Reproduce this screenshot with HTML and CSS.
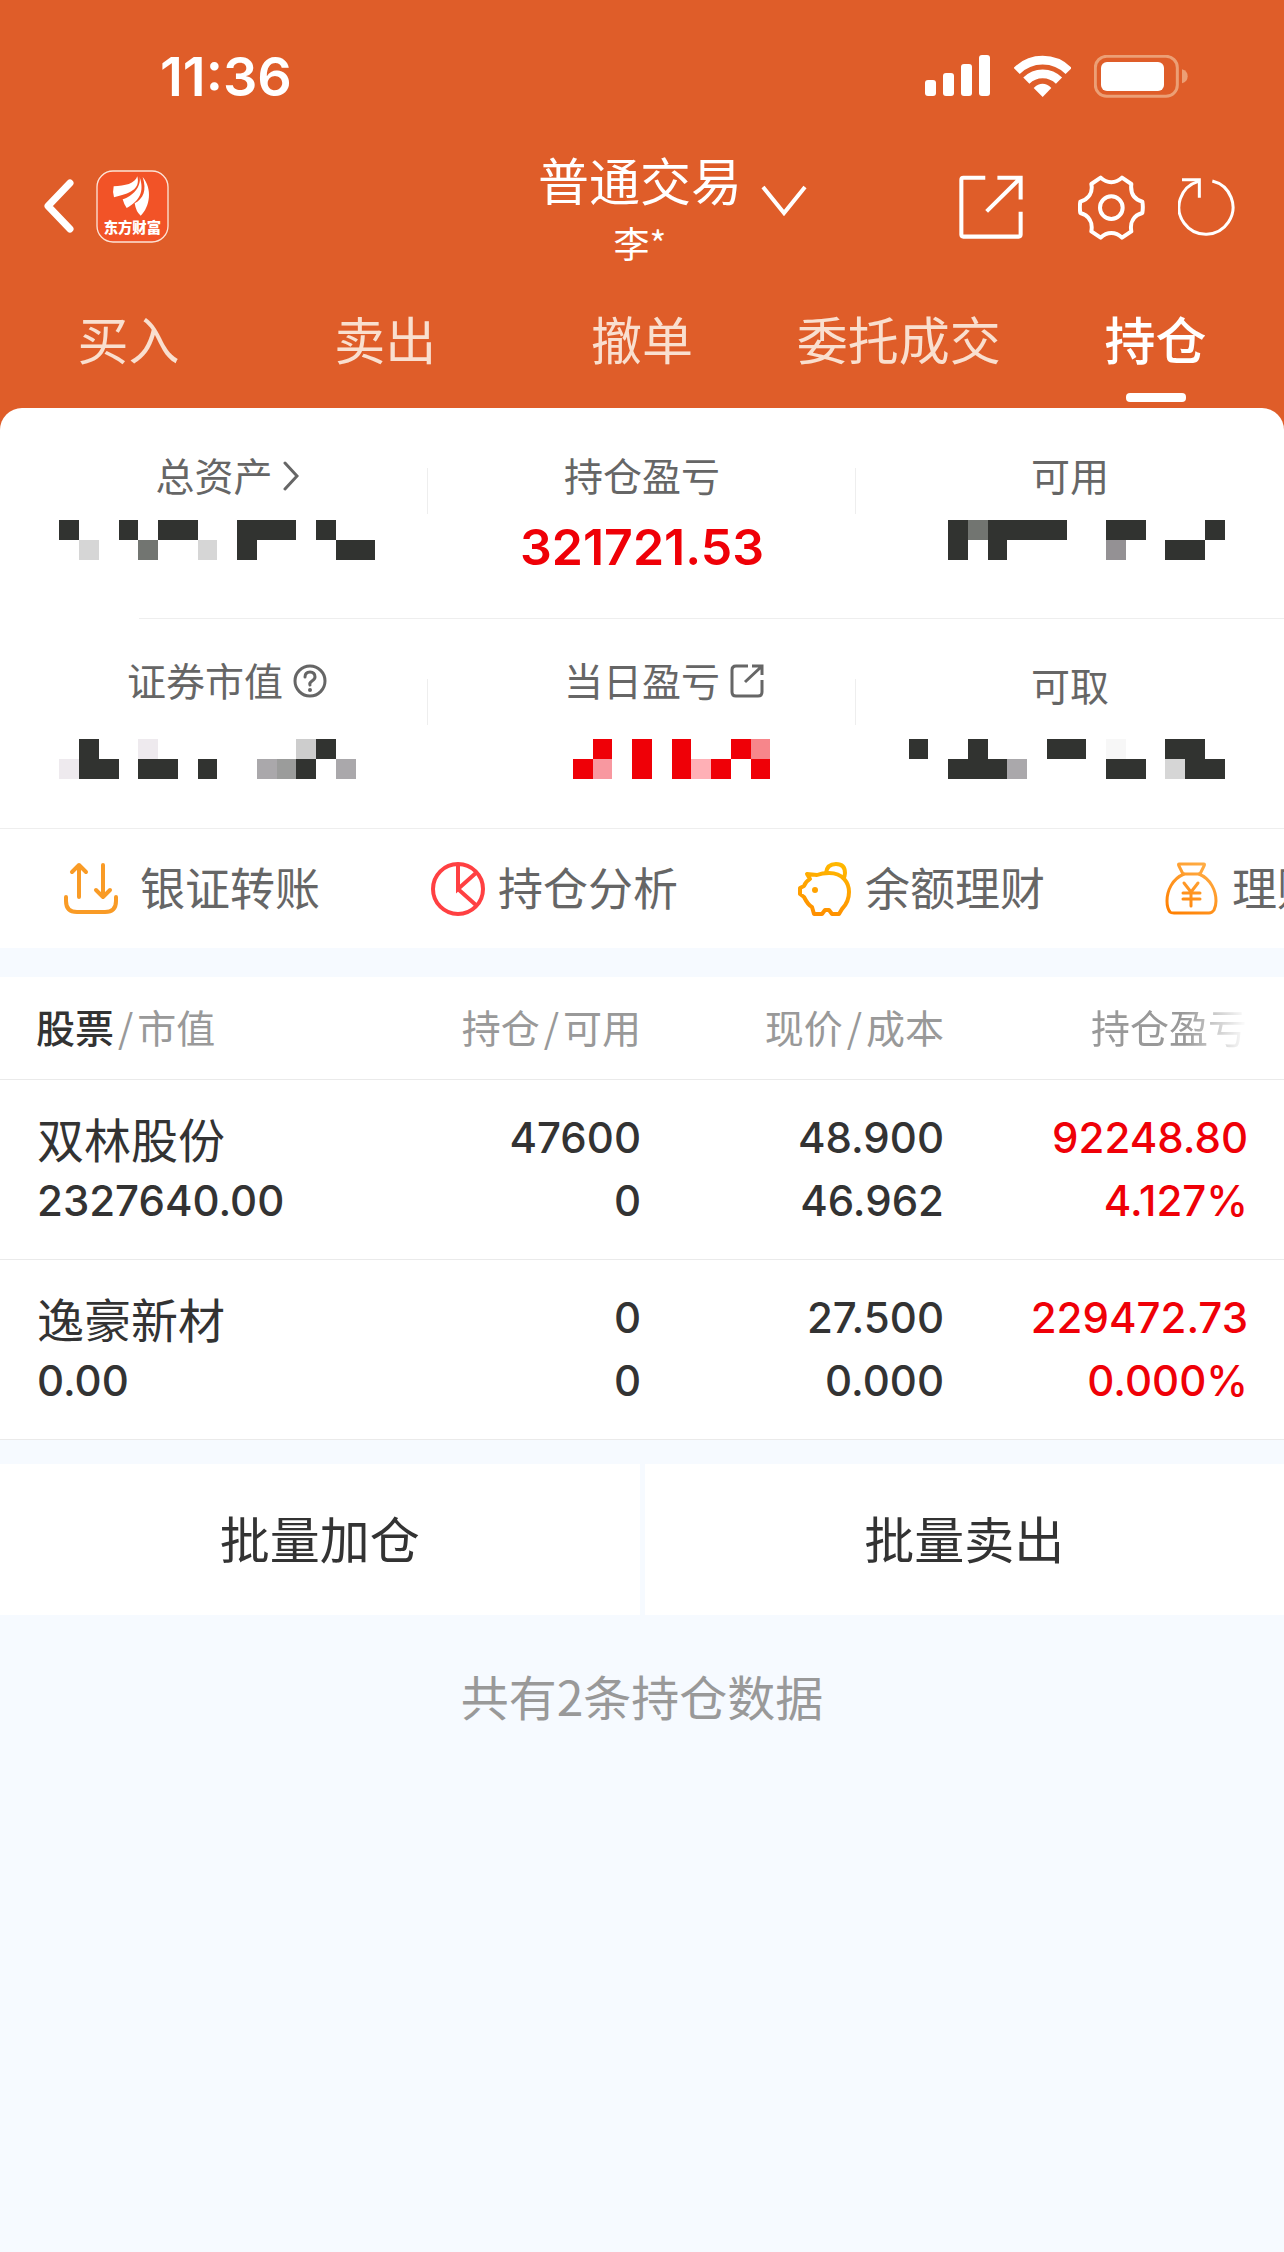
FILE: index.html
```
<!DOCTYPE html>
<html lang="zh-CN">
<head>
    <meta charset="UTF-8">
    <meta name="viewport" content="width=device-width, initial-scale=1.0">
    <title>普通交易 - 持仓</title>
    <link rel="stylesheet" href="styles.css">
</head>
<body>
    <header class="header">
        <div class="status-bar">
            <span class="time">11:36</span>
            <div class="status-icons">
                <svg width="66" height="42" viewBox="0 0 66 42" fill="#fff">
                    <rect x="0" y="25" width="11" height="16" rx="3"/>
                    <rect x="18" y="18" width="11" height="23" rx="3"/>
                    <rect x="36" y="9" width="11" height="32" rx="3"/>
                    <rect x="54" y="0" width="11" height="41" rx="3"/>
                </svg>
                <svg width="57" height="42" viewBox="339 72 171 126" fill="none" stroke="#fff" stroke-width="26">
                    <path d="M347 120A110 110 0 0 1 503 120"/>
                    <path d="M376 149A69 69 0 0 1 474 149"/>
                    <path d="M425 198L398 171Q425 146 451 171Z" fill="#fff" stroke="none"/>
                </svg>
                <svg class="battery" width="94" height="43" viewBox="579 72 282 129">
                    <rect x="583" y="76" width="246" height="120" rx="34" fill="none" stroke="#ec9f75" stroke-width="9"/>
                    <rect x="600" y="93" width="189" height="87" rx="18" fill="#fff"/>
                    <path d="M843 115q17 5 17 21t-17 21z" fill="#ec9f75"/>
                </svg>
            </div>
        </div>

        <div class="nav-bar">
            <div class="nav-left">
                <button class="icon-btn" aria-label="返回">
                    <svg width="30" height="54" viewBox="0 0 30 54" fill="none" stroke="#fff" stroke-width="7" stroke-linecap="round" stroke-linejoin="round">
                        <path d="M26 4L4 27L26 50"/>
                    </svg>
                </button>
                <svg width="73" height="73" viewBox="288 419 219 219">
                    <rect x="291" y="422" width="213" height="213" rx="48" fill="#f25327" stroke="#fde3d6" stroke-width="4"/>
                    <g fill="#fff">
                        <path d="M412 438C405 460 375 467 341 468Q337 485 342 501C388 490 422 478 412 438Z"/>
                        <path d="M419 440C424 470 398 498 368 507Q372 522 380 533C418 512 434 485 419 440Z"/>
                        <path d="M428 440C441 480 430 505 404 519Q408 545 422 556C450 530 458 475 428 440Z"/>
                    </g>
                    <text x="397" y="607" class="logo-text">东方财富</text>
                </svg>
            </div>
            <button class="account">
                <span class="account-type">普通交易
                    <svg class="account-arrow" width="46" height="32" viewBox="0 0 46 32" fill="none" stroke="#fff" stroke-width="4">
                        <path d="M2 2L23 28L44 2"/>
                    </svg>
                </span>
                <span class="account-name">李*</span>
            </button>
            <div class="nav-right">
                <button class="icon-btn" aria-label="分享">
                    <svg width="64" height="64" viewBox="180 440 190 190" fill="none" stroke="#fff" stroke-width="12">
                        <path d="M258 448H193Q187 448 187 454V617Q187 623 193 623H357Q363 623 363 617V549"/>
                        <path d="M294 448H363V513M361 450L262 548"/>
                    </svg>
                </button>
                <button class="icon-btn settings" aria-label="设置">
                    <svg width="67" height="65" viewBox="535 433 201 195" fill="none" stroke="#fff" stroke-width="12" stroke-linejoin="round">
                        <path d="M603 441C622 459 648 459 667 441L695 460C692 485 700 505 728 513Q731 530 728 547C702 554 690 575 695 602L667 621C648 602 622 602 603 621L575 602C580 575 568 554 542 547Q539 530 542 513C568 505 580 485 575 460Z"/>
                        <circle cx="635" cy="531" r="34"/>
                    </svg>
                </button>
                <button class="icon-btn" aria-label="刷新">
                    <svg width="58" height="58" viewBox="832 445 174 174" fill="none" stroke="#fff" stroke-width="9">
                        <path d="M935 454A81 81 0 1 1 893 455"/>
                        <path d="M844 450H896V504"/>
                    </svg>
                </button>
            </div>
        </div>

        <nav class="tabs">
            <a href="#" class="tab">买入</a>
            <a href="#" class="tab">卖出</a>
            <a href="#" class="tab">撤单</a>
            <a href="#" class="tab">委托成交</a>
            <a href="#" class="tab active">持仓</a>
        </nav>
    </header>

    <main>
        <section class="summary">
            <div class="stat-row">
                <div class="stat">
                    <div class="stat-label">总资产
                        <span class="hang">
                            <svg width="16" height="30" viewBox="0 0 16 30" fill="none" stroke="#666" stroke-width="3" stroke-linecap="round"><path d="M2 2L14 15L2 28"/></svg>
                        </span>
                    </div>
                    <div class="stat-value">
                        <svg class="mosaic" width="316" height="40" viewBox="0 0 316 40">
                            <path class="dark" d="M0 0h20v20h-20zM60 0h19v20h-19zM99 0h40v20h-40zM178 0h59v20h-39v20h-20zM257 0h20v20h-20zM277 20h39v20h-39z"/>
                            <path fill="#d6d6d6" d="M20 20h20v20h-20zM139 20h19v20h-19z"/>
                            <path fill="#727571" d="M79 20h20v20h-20z"/>
                        </svg>
                    </div>
                </div>
                <div class="stat">
                    <div class="stat-label">持仓盈亏</div>
                    <div class="stat-value number red">321721.53</div>
                </div>
                <div class="stat">
                    <div class="stat-label">可用</div>
                    <div class="stat-value">
                        <svg class="mosaic" width="316" height="40" viewBox="0 0 316 40">
                            <path class="dark" d="M39 0h20v40h-20zM79 0h79v20h-60v20h-19zM197 0h40v20h-40zM296 0h20v20h-20zM256 20h40v20h-40z"/>
                            <path fill="#727571" d="M59 0h20v20h-20z"/>
                            <path fill="#949194" d="M197 20h20v20h-20z"/>
                        </svg>
                    </div>
                </div>
            </div>
            <div class="stat-row second">
                <div class="stat market">
                    <div class="stat-label">证券市值
                        <span class="hang">
                            <svg width="34" height="34" viewBox="0 0 34 34" fill="none" stroke="#666" stroke-width="3" stroke-linecap="round">
                                <circle cx="17" cy="17" r="15"/>
                                <path d="M12 13Q12 8 17 8T22 13Q22 15 19 17T17 21"/>
                                <circle cx="17" cy="26" r="2" fill="#666" stroke="none"/>
                            </svg>
                        </span>
                    </div>
                    <div class="stat-value">
                        <svg class="mosaic" width="316" height="40" viewBox="0 0 316 40">
                            <path class="dark" d="M20 0h20v20h20v20h-40zM257 0h20v20h-20zM79 20h40v20h-40zM139 20h19v20h-19zM237 20h20v20h-20z"/>
                            <path fill="#eeeaee" d="M79 0h20v20h-20zM0 20h20v20h-20z"/>
                            <path fill="#cdcdcd" d="M237 0h20v20h-20z"/>
                            <path fill="#aaa8ab" d="M198 20h20v20h-20zM277 20h20v20h-20z"/>
                            <path fill="#9b9c9b" d="M218 20h19v20h-19z"/>
                        </svg>
                    </div>
                </div>
                <div class="stat">
                    <div class="stat-label">当日盈亏
                        <span class="hang">
                            <svg width="34" height="34" viewBox="0 0 34 34" fill="none" stroke="#666" stroke-width="3">
                                <path d="M18 2H6Q2 2 2 6V28Q2 32 6 32H28Q32 32 32 28V16"/>
                                <path d="M22 2H32V11M31 3L15 18"/>
                            </svg>
                        </span>
                    </div>
                    <div class="stat-value">
                        <svg class="mosaic" width="256" height="40" viewBox="0 0 256 40">
                            <path fill="#ef0007" d="M79 0h19v20h-19zM59 20h20v20h-20zM118 0h20v40h-20zM158 0h19v40h-19zM217 0h20v20h-20zM197 20h20v20h-20zM237 20h19v20h-19z"/>
                            <path fill="#f7868b" d="M237 0h19v20h-19z"/>
                            <path fill="#f898a0" d="M79 20h19v20h-19z"/>
                            <path fill="#ffb0b6" d="M177 20h20v20h-20z"/>
                        </svg>
                    </div>
                </div>
                <div class="stat low">
                    <div class="stat-label">可取</div>
                    <div class="stat-value">
                        <svg class="mosaic" width="316" height="40" viewBox="0 0 316 40">
                            <path class="dark" d="M0 0h19v20h-19zM59 0h20v20h19v20h-59v-20h20zM138 0h39v20h-39zM197 20h40v20h-40zM256 0h40v20h20v20h-40v-20h-20z"/>
                            <path fill="#aaa8ab" d="M98 20h20v20h-20z"/>
                            <path fill="#f7f7f7" d="M197 0h20v20h-20z"/>
                            <path fill="#d6d6d6" d="M256 20h20v20h-20z"/>
                        </svg>
                    </div>
                </div>
            </div>
        </section>

        <section class="actions">
            <button class="action transfer">
                <svg width="54" height="54" viewBox="64 861 54 54" fill="none" stroke="#f99b26" stroke-width="4" stroke-linecap="round" stroke-linejoin="round">
                    <path d="M79 896V864M72 871L79 864L86 871M103 864V896M96 889L103 896L110 889"/>
                    <path d="M66 896V900Q66 911 77 911H105Q116 911 116 900V896"/>
                </svg>
                <span>银证转账</span>
            </button>
            <button class="action">
                <svg width="54" height="54" viewBox="431 861 54 54" fill="none" stroke="#ff4042" stroke-width="4">
                    <circle cx="458" cy="888" r="25"/>
                    <path d="M458 863V888L477 871M458 888L477 905"/>
                </svg>
                <span>持仓分析</span>
            </button>
            <button class="action">
                <svg width="54" height="54" viewBox="798 861 54 54" fill="none" stroke="url(#pig)" stroke-width="4" stroke-linejoin="round">
                    <defs>
                        <linearGradient id="pig" gradientUnits="userSpaceOnUse" x1="830" y1="861" x2="820" y2="915">
                            <stop offset="0" stop-color="#ffb800"/>
                            <stop offset="1" stop-color="#ff8f00"/>
                        </linearGradient>
                    </defs>
                    <path d="M807 873L817 874Q822 872 829 872C843 872 849 882 849 891C849 899 845 905 842 908L839 913H832L829 909H825L822 913H814L812 906C808 904 806 900 804 896L800 893V887L804 885Q806 880 810 878Z"/>
                    <path d="M826 872Q827 863 836 863Q845 863 845 872Q845 876 843 878"/>
                    <circle cx="815" cy="889" r="3" fill="#ffa200" stroke="none"/>
                </svg>
                <span>余额理财</span>
            </button>
            <button class="action">
                <svg width="54" height="54" viewBox="1165 861 54 54" fill="none" stroke="url(#bag)" stroke-width="3" stroke-linecap="round" stroke-linejoin="round">
                    <defs>
                        <linearGradient id="bag" gradientUnits="userSpaceOnUse" x1="1210" y1="861" x2="1175" y2="915">
                            <stop offset="0" stop-color="#ffb04a"/>
                            <stop offset="1" stop-color="#ff7f00"/>
                        </linearGradient>
                    </defs>
                    <path d="M1179 863H1204Q1205 863 1204 865L1200 873H1183L1179 865Q1178 863 1179 863Z"/>
                    <path d="M1184 873C1172 878 1167 890 1167 900Q1167 907 1170 911Q1171 912 1174 912H1209Q1212 912 1214 909Q1216 905 1216 900C1216 890 1211 878 1199 873"/>
                    <path d="M1184 882L1191 891L1198 882M1191 891V905M1183 892H1200M1183 898H1200"/>
                </svg>
                <span>理财产品</span>
            </button>
        </section>

        <table class="holdings">
            <thead>
                <tr>
                    <th><b>股票</b><i>/</i>市值</th>
                    <th>持仓<i>/</i>可用</th>
                    <th>现价<i>/</i>成本</th>
                    <th><span class="fade">持仓盈亏</span></th>
                </tr>
            </thead>
            <tbody>
                <tr>
                    <td><div class="name">双林股份</div><div>2327640.00</div></td>
                    <td><div>47600</div><div>0</div></td>
                    <td><div>48.900</div><div>46.962</div></td>
                    <td class="red"><div>92248.80</div><div>4.127%</div></td>
                </tr>
                <tr>
                    <td><div class="name">逸豪新材</div><div>0.00</div></td>
                    <td><div>0</div><div>0</div></td>
                    <td><div>27.500</div><div>0.000</div></td>
                    <td class="red"><div>229472.73</div><div>0.000%</div></td>
                </tr>
            </tbody>
        </table>

        <div class="batch">
            <button class="batch-btn">批量加仓</button>
            <button class="batch-btn">批量卖出</button>
        </div>

        <p class="total">共有2条持仓数据</p>
    </main>
</body>
</html>
```
FILE: styles.css
```
* {
    box-sizing: border-box;
}

body {
    margin: 0;
    background: #f6faff;
    color: #333;
    font-family: "Noto Sans CJK SC", sans-serif;
    overflow-x: hidden;
}

button {
    padding: 0;
    border: none;
    background: none;
    color: inherit;
    font: inherit;
    cursor: pointer;
}

svg {
    display: block;
    flex-shrink: 0;
}

.red {
    color: #ef0007;
}

/* Header */
.header {
    padding-bottom: 24px;
    background: #df5d29;
    color: #fff;
}

.status-bar {
    display: flex;
    justify-content: space-between;
    align-items: center;
    height: 143px;
    padding: 9px 96px 0 160px;
}

.time {
    font-family: Inter, sans-serif;
    font-size: 54px;
    font-weight: 600;
}

.status-icons {
    display: flex;
    align-items: center;
    gap: 23px;
}

.nav-bar {
    display: grid;
    grid-template-columns: 1fr auto 1fr;
    align-items: center;
    padding: 0 48px 0 44px;
}

.nav-left,
.nav-right {
    display: flex;
    align-items: center;
}

.nav-left {
    gap: 22px;
}

.nav-right {
    justify-content: flex-end;
    padding-top: 2px;
}

.settings {
    margin: 0 33px 0 55px;
}

.logo-text {
    fill: #fff;
    font-size: 43px;
    font-weight: 900;
    text-anchor: middle;
}

.account {
    display: flex;
    flex-direction: column;
    align-items: center;
}

.account-type {
    position: relative;
    font-size: 51px;
    line-height: 72px;
}

.account-arrow {
    position: absolute;
    left: 100%;
    top: 42px;
    margin-left: 19px;
}

.account-name {
    font-size: 36px;
    line-height: 54px;
}

.tabs {
    display: grid;
    grid-template-columns: repeat(5, 1fr);
}

.tab {
    position: relative;
    color: #f9dfcf;
    font-size: 51px;
    line-height: 139px;
    text-align: center;
    text-decoration: none;
}

.tab.active {
    color: #fff;
    font-weight: 500;
}

.tab.active::after {
    content: "";
    position: absolute;
    left: calc(50% - 30px);
    bottom: 6px;
    width: 60px;
    height: 9px;
    border-radius: 4px;
    background: #fff;
}

/* Account summary */
.summary {
    margin-top: -24px;
    border-radius: 22px 22px 0 0;
    background: #fff;
}

.stat-row {
    display: grid;
    grid-template-columns: repeat(3, minmax(0, 1fr));
}

.stat-row::after {
    content: "";
    grid-column: 1 / -1;
    height: 1px;
    margin-left: 139px;
    background: #eee;
}

.stat-row.second::after {
    margin-left: 0;
}

.stat {
    height: 210px;
    padding-top: 38px;
    background: linear-gradient(#eee, #eee) no-repeat right 60px / 1px 46px;
}

.stat:first-child {
    border-radius: 22px 0 0 0;
}

.stat:last-child {
    background: none;
}

.stat-label {
    display: flex;
    justify-content: center;
    align-items: center;
    color: #666;
    font-size: 39px;
    line-height: 56px;
}

.hang {
    width: 0;
    padding-top: 3px;
}

.hang svg {
    margin-left: 10px;
}

.stat-value {
    display: flex;
    justify-content: center;
    padding-top: 18px;
}

.stat:first-child .stat-value {
    justify-content: flex-start;
    padding-left: 59px;
}

.stat:last-child .stat-value {
    justify-content: flex-end;
    padding-right: 59px;
}

.number {
    font-family: Inter, sans-serif;
    font-size: 50px;
    font-weight: 600;
    line-height: 54px;
}

.mosaic {
    shape-rendering: crispEdges;
}

.dark {
    fill: #313330;
}

.second .stat {
    height: 209px;
    padding-top: 32px;
}

.second .stat-value {
    padding-top: 32px;
}

.market .stat-label {
    padding-right: 18px;
}

.second .low .stat-label {
    line-height: 66px;
}

.second .low .stat-value {
    padding-top: 22px;
}

/* Shortcuts */
.actions {
    display: grid;
    grid-template-columns: repeat(4, 367px);
    height: 119px;
    padding-left: 64px;
    overflow: hidden;
    background: #fff;
}

.action {
    display: flex;
    align-items: center;
    gap: 13px;
    color: #666;
    font-size: 45px;
    white-space: nowrap;
}

.action span {
    padding-bottom: 4px;
}

.transfer {
    gap: 22px;
}

/* Holdings */
.holdings {
    width: 100%;
    margin-top: 29px;
    border-collapse: collapse;
    table-layout: fixed;
    background: #fff;
}

.holdings tr {
    border-bottom: 1px solid #eaeaea;
}

.holdings th {
    width: 303px;
    height: 102px;
    padding: 0 0 4px;
    color: #999;
    font-size: 39px;
    font-weight: 400;
    text-align: right;
}

.holdings th:first-child {
    width: auto;
    padding-left: 36px;
    text-align: left;
}

.holdings th:last-child {
    width: 340px;
    padding-right: 37px;
}

.holdings b {
    color: #333;
    font-weight: 500;
}

.holdings i {
    padding: 0 4px;
    font-style: normal;
}

.fade {
    -webkit-mask-image: linear-gradient(to right, #000 60%, transparent);
    mask-image: linear-gradient(to right, #000 60%, transparent);
}

.holdings td {
    padding: 26px 0 27px;
    font-family: Inter, sans-serif;
    font-size: 42px;
    font-weight: 500;
    line-height: 63px;
    text-align: right;
}

.holdings td:first-child {
    padding-left: 37px;
    text-align: left;
}

.holdings td:last-child {
    padding-right: 36px;
}

.holdings .name {
    font-family: "Noto Sans CJK SC", sans-serif;
    font-size: 47px;
    font-weight: 400;
}

/* Batch buttons */
.batch {
    display: grid;
    grid-template-columns: 1fr 1fr;
    gap: 5px;
    margin-top: 24px;
}

.batch-btn {
    height: 151px;
    padding-bottom: 4px;
    background: #fff;
    font-size: 50px;
}

.total {
    margin: 45px 0;
    color: #999;
    font-size: 48px;
    line-height: 70px;
    text-align: center;
}
```
